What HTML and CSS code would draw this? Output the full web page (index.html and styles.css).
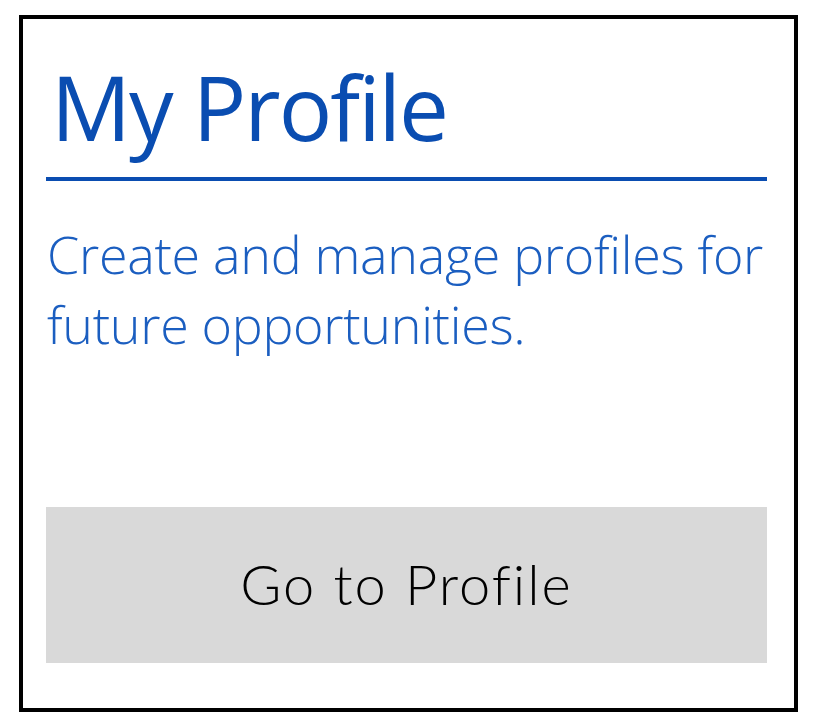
FILE: index.html
```html
<!DOCTYPE html>
<html lang="en">
<head>
    <meta charset="UTF-8">
    <meta name="viewport" content="width=device-width, initial-scale=1.0">
    <title>My Profile</title>
    <link rel="stylesheet" href="styles.css">
</head>
<body>
    <div class="card">
        <h1 class="card-title">My Profile</h1>
        <p class="card-text">Create and manage profiles for future opportunities.</p>
        <button class="card-button">Go to Profile</button>
    </div>
</body>
</html>
```

FILE: styles.css
```css
body {
    margin: 0;
    background-color: #ffffff;
    font-family: "Open Sans", sans-serif;
}
.card {
    box-sizing: border-box;
    width: 779px;
    height: 697px;
    margin: 15px 0 0 19px;
    padding: 34px 27px 45px 23px;
    border: 4px solid #000000;
    display: flex;
    flex-direction: column;
}
.card-title {
    margin: 0;
    padding: 0 0 16px 5px;
    font-size: 89px;
    font-weight: 400;
    line-height: 108px;
    letter-spacing: -2px;
    color: #0a4db1;
    border-bottom: 4px solid #0a4db1;
}
.card-text {
    margin: 38px 0 0 1px;
    font-size: 52px;
    font-weight: 300;
    line-height: 70px;
    letter-spacing: -0.3px;
    color: #1b5ec0;
}
.card-button {
    margin-top: auto;
    height: 156px;
    padding: 0 0 4px;
    border: none;
    background-color: #d9d9d9;
    color: #000000;
    font-family: "Lato", sans-serif;
    font-size: 56px;
    font-weight: 300;
    letter-spacing: 2px;
    cursor: pointer;
}
```
